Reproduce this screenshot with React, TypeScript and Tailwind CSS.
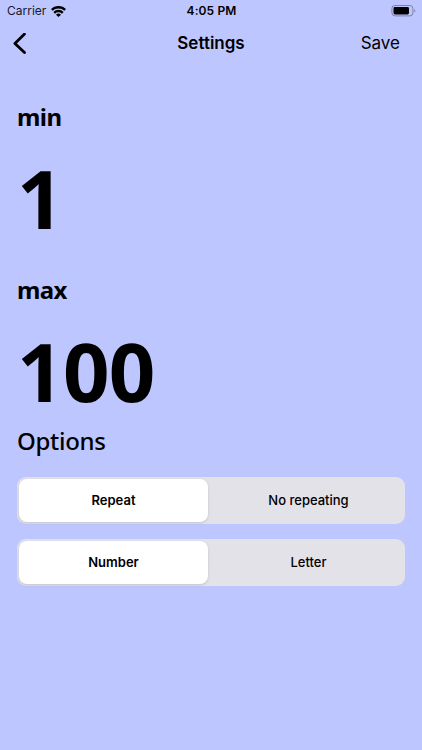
import { useState } from 'react';

function Segments({ labels }: { labels: string[] }) {
  const [active, setActive] = useState(0);
  return (
    <div className="flex h-[47px] rounded-[9px] bg-[#e3e2e9] p-[2px]">
      {labels.map((label, i) => (
        <button
          key={label}
          onClick={() => setActive(i)}
          className={
            i === active
              ? 'h-[43px] w-[189px] rounded-[8px] bg-white text-[13px] font-semibold shadow-[0_1px_3px_rgba(0,0,0,0.14)]'
              : 'h-[43px] flex-1 pl-[6px] text-[13px] font-medium'
          }
        >
          {label}
        </button>
      ))}
    </div>
  );
}

export default function App() {
  return (
    <main className="flex h-[750px] w-[422px] flex-col overflow-hidden bg-[#bec6ff] font-['Inter',sans-serif] text-black">
      <div className="grid h-[22px] grid-cols-3 items-center pr-[6px] pl-[7px] text-[12px]">
        <div className="flex items-center gap-[5px] text-[#171a2b]">
          <span>Carrier</span>
          <svg width="15" height="11" viewBox="0 0 15 11" fill="none" stroke="black" strokeWidth="2.4">
            <path d="M.8 3.9a9.6 9.6 0 0 1 13.4 0M3.2 6.8a6.2 6.2 0 0 1 8.6 0" />
            <path d="M7.5 11 5 8.8a3.6 3.6 0 0 1 5 0z" fill="black" stroke="none" />
          </svg>
        </div>
        <span className="text-center font-semibold tracking-[0.1px]">4:05 PM</span>
        <svg className="justify-self-end" width="25" height="12" viewBox="0 0 25 12">
          <rect x=".9" y=".5" width="21" height="10.4" rx="3" fill="none" stroke="#7b81a5" />
          <rect x="2.5" y="2" width="15.5" height="7.4" rx="1.4" />
          <path d="M23.4 4q2 1.8 0 3.6z" fill="#7b81a5" />
        </svg>
      </div>
      <header className="grid h-[43px] grid-cols-[1fr_auto_1fr] items-center pr-[22px] pl-[13px] text-[17px]">
        <svg width="22" height="22" viewBox="0 0 22 22" fill="none" stroke="black" strokeWidth="2.8" strokeLinecap="round" strokeLinejoin="round">
          <path d="M11.5 1.1 1.9 10.4l9.6 9.2" />
        </svg>
        <h1 className="relative left-[4.5px] text-center font-semibold">Settings</h1>
        <span className="text-right">Save</span>
      </header>
      <section className="flex flex-col px-[17px] pt-[35px] font-['Noto_Sans',sans-serif]">
        <h2 className="h-[34px] text-[24px] leading-[34px] font-bold tracking-[-0.6px]">min</h2>
        <p className="mt-[9px] h-[110px] text-[81.5px] leading-[110px] font-bold tracking-[-0.7px]">1</p>
        <h2 className="mt-[20px] h-[34px] text-[24px] leading-[34px] font-bold tracking-[-0.7px]">max</h2>
        <p className="mt-[9px] h-[110px] text-[81.5px] leading-[110px] font-bold tracking-[-0.7px]">100</p>
        <h2 className="-mt-[2px] h-[34px] text-[24px] leading-[34px] font-medium tracking-[-0.3px]">Options</h2>
      </section>
      <section className="mt-[19px] mr-[17px] ml-[17px] flex flex-col gap-[15px]">
        <Segments labels={['Repeat', 'No repeating']} />
        <Segments labels={['Number', 'Letter']} />
      </section>
    </main>
  );
}
